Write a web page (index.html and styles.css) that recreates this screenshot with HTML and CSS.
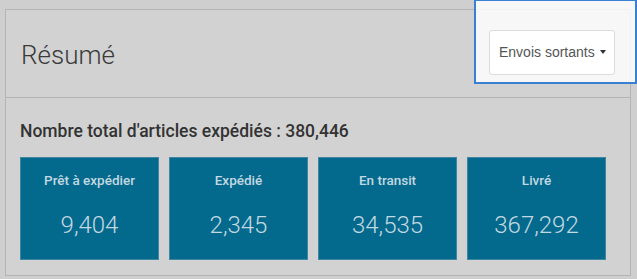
FILE: index.html
```html
<!DOCTYPE html>
<html>
<head>
    <meta name="viewport" content="width=device-width, initial-scale=1">
    <link rel="stylesheet" href="styles.css">
</head>
<body>
    <div class="panel">
        <div class="panel-header">
            <h1 class="title">Résumé</h1>
            <button class="dropdown">Envois sortants <span class="caret"></span></button>
        </div>
        <div class="panel-body">
            <div class="total">Nombre total d'articles expédiés : 380,446</div>
            <div class="cards">
                <div class="card">
                    <div class="card-label">Prêt à expédier</div>
                    <div class="card-value">9,404</div>
                </div>
                <div class="card">
                    <div class="card-label">Expédié</div>
                    <div class="card-value">2,345</div>
                </div>
                <div class="card">
                    <div class="card-label">En transit</div>
                    <div class="card-value">34,535</div>
                </div>
                <div class="card">
                    <div class="card-label">Livré</div>
                    <div class="card-value">367,292</div>
                </div>
            </div>
        </div>
    </div>
    <div class="highlight"></div>
</body>
</html>
```

FILE: styles.css
```css
body {
    margin: 0;
    padding: 9px 0 0 5px;
    background: #cfcfcf;
    font-family: Roboto, "Liberation Sans", sans-serif;
    height: 279px;
    box-sizing: border-box;
    overflow: hidden;
}
.panel {
    width: 626px;
    height: 267px;
    box-sizing: border-box;
    border: 1px solid #b4b4b4;
    background: #d2d2d2;
}
.panel-header {
    height: 88px;
    box-sizing: border-box;
    border-bottom: 1px solid #b4b4b4;
    display: flex;
    align-items: center;
    justify-content: space-between;
    padding: 0 15px 0 15px;
}
.title {
    margin: 0;
    font-size: 26px;
    font-weight: 300;
    color: #3a3a3a;
    position: relative;
    top: 1px;
}
.dropdown {
    position: relative;
    z-index: 2;
    width: 126px;
    height: 45px;
    margin-top: -3px;
    padding: 0 8px 0 9px;
    display: flex;
    align-items: center;
    justify-content: space-between;
    white-space: nowrap;
    background: #fff;
    border: 1px solid #dcdcdc;
    border-radius: 3px;
    font-family: "Liberation Sans", Arial, sans-serif;
    font-size: 14px;
    color: #555;
}
.caret {
    flex-shrink: 0;
    width: 0;
    height: 0;
    border-left: 3.5px solid transparent;
    border-right: 3.5px solid transparent;
    border-top: 4px solid #333;
}
.panel-body {
    padding: 23px 14px 0 14px;
}
.total {
    font-size: 17.5px;
    font-weight: 500;
    color: #333;
    line-height: 20px;
}
.cards {
    display: flex;
    gap: 10px;
    margin-top: 16px;
}
.card {
    width: 139px;
    height: 103px;
    box-sizing: border-box;
    background: #036a8d;
    border: 1px solid #3f86a1;
    text-align: center;
    color: #c4d8e1;
}
.card-label {
    margin-top: 13px;
    font-size: 13.5px;
    font-weight: 500;
    line-height: 18px;
}
.card-value {
    margin-top: 22px;
    font-size: 24px;
    font-weight: 300;
    line-height: 28px;
}
.highlight {
    position: absolute;
    left: 474px;
    top: -1px;
    width: 163px;
    height: 85px;
    box-sizing: border-box;
    border: 2px solid #3a80d2;
    background: rgba(255, 255, 255, 0.82);
    z-index: 1;
}
```
